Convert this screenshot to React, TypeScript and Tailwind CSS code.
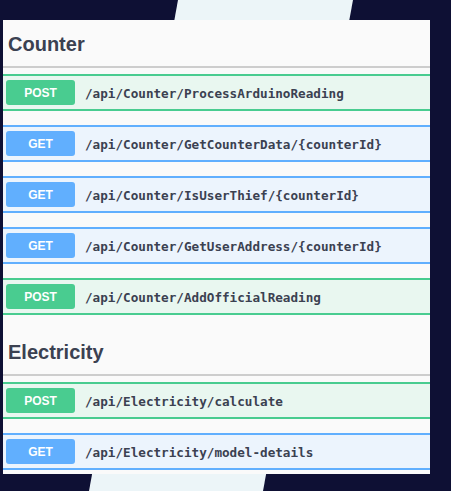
import React from "react";

type Op = { method: "GET" | "POST"; path: string };

const counterOps: Op[] = [
  { method: "POST", path: "/api/Counter/ProcessArduinoReading" },
  { method: "GET", path: "/api/Counter/GetCounterData/{counterId}" },
  { method: "GET", path: "/api/Counter/IsUserThief/{counterId}" },
  { method: "GET", path: "/api/Counter/GetUserAddress/{counterId}" },
  { method: "POST", path: "/api/Counter/AddOfficialReading" },
];

const electricityOps: Op[] = [
  { method: "POST", path: "/api/Electricity/calculate" },
  { method: "GET", path: "/api/Electricity/model-details" },
];

function Row({ op }: { op: Op }) {
  const isPost = op.method === "POST";
  return (
    <div
      className={
        "flex h-[37px] items-center gap-[10px] pl-[3px] mb-[14px] border-y-2 " +
        (isPost
          ? "border-[#49cc90] bg-[#e9f7f0]"
          : "border-[#61affe] bg-[#ecf4fd]")
      }
    >
      <span
        className={
          "flex h-[25px] w-[69px] items-center justify-center rounded-[3px] text-[12px] font-bold text-white " +
          (isPost ? "bg-[#49cc90]" : "bg-[#61affe]")
        }
        style={{ fontFamily: '"Liberation Sans", Arial, sans-serif' }}
      >
        {op.method}
      </span>
      <span
        className="pt-[4px] text-[12.65px] font-bold text-[#3b4151]"
        style={{ fontFamily: '"DejaVu Sans Mono", monospace' }}
      >
        {op.path}
      </span>
    </div>
  );
}

function Heading({ title }: { title: string }) {
  return (
    <div
      className="flex h-[48px] items-center pl-[5px] pt-[2px] border-b-2 border-[#cdcdcd] mb-[6px] text-[20px] font-bold text-[#3b4151]"
      style={{ fontFamily: '"Liberation Sans", Arial, sans-serif' }}
    >
      {title}
    </div>
  );
}

export default function App() {
  return (
    <div className="relative h-[491px] w-[451px] overflow-hidden bg-[#0e1034]">
      <svg
        className="absolute left-0 top-0"
        width="451"
        height="491"
        viewBox="0 0 451 491"
      >
        <polygon points="178,0 353,0 263,491 89,491" fill="#ecf5f8" />
      </svg>
      <div className="relative pt-[20px] pl-[3px]">
        <div className="w-[427px] bg-[#fafafa] pb-[1px]">
          <Heading title="Counter" />
          {counterOps.map((op) => (
            <Row key={op.path} op={op} />
          ))}
          <div className="-mt-[1px]">
            <Heading title="Electricity" />
          </div>
          {electricityOps.map((op, i) => (
            <div key={op.path} className={i === electricityOps.length - 1 ? "-mb-[11px]" : ""}>
              <Row op={op} />
            </div>
          ))}
        </div>
      </div>
    </div>
  );
}
